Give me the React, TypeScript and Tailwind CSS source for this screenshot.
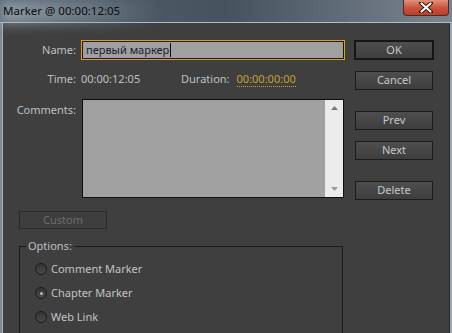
import React from "react";

const font = { fontFamily: '"Noto Sans", "Open Sans", Arial, sans-serif' };

function Btn({ label, primary = false, className = "" }: { label: string; primary?: boolean; className?: string }) {
  return (
    <div
      className={
        "flex items-center justify-center text-[11px] text-[#c4c8cc] bg-gradient-to-b from-[#4e4e4e] to-[#3e3e3e] " +
        (primary ? "h-[20px] w-[80px] border-2 border-[#161616]" : "h-[19px] w-[78px] ml-[1px] border border-[#1c1c1c]") +
        " " +
        className
      }
    >
      {label}
    </div>
  );
}

function Radio({ label, checked = false }: { label: string; checked?: boolean }) {
  return (
    <div className="flex items-center h-[24px]">
      <div className="w-[12px] h-[12px] rounded-full border border-[#1a1a1a] bg-gradient-to-b from-[#333] to-[#4a4a4a] flex items-center justify-center">
        {checked && <div className="w-[3px] h-[3px] rounded-full bg-[#b8b8b8]" />}
      </div>
      <span className="ml-[4px] text-[11px] text-[#c0c4c8]">{label}</span>
    </div>
  );
}

export default function App() {
  return (
    <div className="w-[452px] h-[333px] overflow-hidden relative bg-gradient-to-r from-[#55636f] via-[#46535f] to-[#7a8590]" style={font}>
      {/* title bar */}
      <div className="h-[22px] flex items-start relative">
        <div className="absolute left-0 top-0 w-[160px] h-[24px] bg-gradient-to-r from-[#a6b2bc]/70 via-[#8e9aa5]/50 to-transparent blur-[6px]" />
        <span className="relative ml-[3px] mt-[2px] text-[11.5px] text-[#0c0c0c]">Marker @ 00:00:12:05</span>
        <div className="absolute left-[403px] top-0 w-[46px] h-[16px] rounded-b-[4px] border border-[#5a2418] border-t-0 bg-gradient-to-b from-[#e0917a] via-[#c9553e] to-[#b8402a] flex items-center justify-center">
          <svg width="14" height="11" viewBox="0 0 14 11">
            <path d="M2 1 L12 10 M12 1 L2 10" stroke="#3a1008" strokeWidth="4" strokeLinecap="round" />
            <path d="M2.5 1.5 L11.5 9.5 M11.5 1.5 L2.5 9.5" stroke="#ffffff" strokeWidth="2.2" strokeLinecap="round" />
          </svg>
        </div>
      </div>
      {/* window body */}
      <div className="flex h-[311px] border-t border-[#b4bcc4]">
        <div className="w-[2px] bg-[#7c8894]" />
        <div className="w-[1px] bg-[#aab3bc]" />
        <div className="flex-1 bg-[#3f3f3f] flex">
          {/* left column */}
          <div className="w-[351px] flex flex-col pt-[17px]">
            {/* name */}
            <div className="flex items-center h-[20px]">
              <div className="w-[73px] text-right text-[11px] text-[#bcc0c6]">Name:</div>
              <div className="ml-[5px] w-[264px] h-[20px] border border-[#d9a024] bg-[#222]">
                <div className="w-full h-full border border-[#1a1a1a] bg-[#a0a0a0] flex items-center pl-[3px] text-[11px] text-[#1c1c34]">
                  первый маркер<span className="w-[1px] h-[14px] bg-[#101010] ml-[1px]" />
                </div>
              </div>
            </div>
            {/* time */}
            <div className="flex items-center h-[20px] mt-[11px]">
              <div className="w-[73px] text-right text-[11px] text-[#bcc0c6]">Time:</div>
              <div className="ml-[5px] w-[100px] text-[11px] text-[#bcc0c6]">00:00:12:05</div>
              <div className="text-[11px] text-[#bcc0c6]">Duration:</div>
              <div className="ml-[7px] text-[11px] text-[#c9a02c] border-b border-dotted border-[#c9a02c] leading-[14px]">00:00:00:00</div>
            </div>
            {/* comments */}
            <div className="flex mt-[11px]">
              <div className="w-[73px] text-right text-[11px] text-[#bcc0c6] pt-[3px]">Comments:</div>
              <div className="ml-[6px] w-[262px] h-[99px] border border-[#0e0e0e] bg-[#a0a0a0] flex justify-end">
                <div className="w-[18px] h-full bg-[#ececec] flex flex-col items-center justify-between py-[6px]">
                  <svg width="7" height="4" viewBox="0 0 7 4"><path d="M0 4 L3.5 0 L7 4 Z" fill="#7a7a7a" /></svg>
                  <svg width="7" height="4" viewBox="0 0 7 4"><path d="M0 0 L3.5 4 L7 0 Z" fill="#9a9a9a" /></svg>
                </div>
              </div>
            </div>
            {/* custom */}
            <div className="ml-[16px] mt-[13px] w-[88px] h-[18px] border border-[#2a2a2a] bg-[#3e3e3e] flex items-center justify-center text-[11px] text-[#6c6c6c]">
              Custom
            </div>
            {/* options */}
            <div className="relative ml-[16px] mt-[17px] w-[324px] h-[100px] border-l border-t border-r border-[#1c1c1c] pl-[15px] pt-[10px]">
              <div className="absolute left-[6px] top-[-9px] px-[2px] bg-[#3f3f3f] text-[11px] text-[#bcc0c6]">Options:</div>
              <Radio label="Comment Marker" />
              <Radio label="Chapter Marker" checked />
              <Radio label="Web Link" />
            </div>
          </div>
          {/* right column */}
          <div className="flex flex-col pt-[17px]">
            <Btn label="OK" primary />
            <Btn label="Cancel" className="mt-[11px]" />
            <Btn label="Prev" className="mt-[21px]" />
            <Btn label="Next" className="mt-[11px]" />
            <Btn label="Delete" className="mt-[21px]" />
          </div>
        </div>
        <div className="w-[1px] bg-[#2a2a2a]" />
        <div className="w-[2px] bg-[#9aa6b2]" />
      </div>
    </div>
  );
}
